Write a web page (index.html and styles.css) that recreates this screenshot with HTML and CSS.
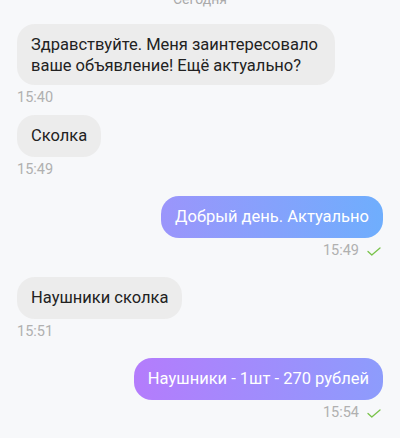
FILE: index.html
```html
<!DOCTYPE html>
<html lang="ru">
<head>
<meta charset="utf-8">
<link rel="stylesheet" href="styles.css">
</head>
<body>
<div class="chat">
  <div class="date">Сегодня</div>

  <div class="msg in first">
    <div class="bubble multi">Здравствуйте. Меня заинтересовало ваше объявление! Ещё актуально?</div>
    <div class="meta">15:40</div>
  </div>

  <div class="msg in">
    <div class="bubble">Сколка</div>
    <div class="meta">15:49</div>
  </div>

  <div class="msg out switch">
    <div class="bubble grad-a">Добрый день. Актуально</div>
    <div class="meta">15:49
      <svg class="check" width="14" height="9" viewBox="0 0 14 9"><path d="M1 4.5 L4.8 8 L13 1" fill="none" stroke="#79c34a" stroke-width="1.3" stroke-linecap="round" stroke-linejoin="round"/></svg>
    </div>
  </div>

  <div class="msg in switch">
    <div class="bubble">Наушники сколка</div>
    <div class="meta">15:51</div>
  </div>

  <div class="msg out switch">
    <div class="bubble grad-b">Наушники - 1шт - 270 рублей</div>
    <div class="meta">15:54
      <svg class="check" width="14" height="9" viewBox="0 0 14 9"><path d="M1 4.5 L4.8 8 L13 1" fill="none" stroke="#79c34a" stroke-width="1.3" stroke-linecap="round" stroke-linejoin="round"/></svg>
    </div>
  </div>
</div>
</body>
</html>
```

FILE: styles.css
```css
html, body {
  margin: 0;
  padding: 0;
  background: #f7f8fa;
}

body {
  font-family: Roboto, "Noto Sans", sans-serif;
  color: #222;
  width: 400px;
  height: 438px;
  overflow: hidden;
}

.chat {
  display: flex;
  flex-direction: column;
  padding: 0 17px;
}

.date {
  margin-top: -9px;
  text-align: center;
  font-size: 14px;
  line-height: 16px;
  color: #aaaaaa;
}

.msg {
  display: flex;
  flex-direction: column;
  margin-top: 9px;
}

.msg.first {
  margin-top: 17px;
}

.msg.switch {
  margin-top: 18px;
}

.msg.in {
  align-items: flex-start;
}

.msg.out {
  align-items: flex-end;
}

.bubble {
  box-sizing: border-box;
  max-width: 318px;
  padding: 10px 14px;
  border-radius: 18px;
  background: #ececec;
  font-size: 16.5px;
  line-height: 22px;
}

.bubble.multi {
  padding: 9.5px 14px;
  line-height: 21px;
}

.grad-a {
  color: #fff;
  background: linear-gradient(90deg, #9b95fb 0%, #6faefd 100%);
}

.grad-b {
  color: #fff;
  background: linear-gradient(90deg, #b47cfc 0%, #8d9cfc 100%);
}

.meta {
  display: flex;
  align-items: center;
  gap: 8px;
  margin-top: 5px;
  font-size: 14.5px;
  line-height: 16px;
  color: #b0b0b0;
}

.msg.out .meta {
  padding-right: 2px;
}

.check {
  display: block;
}
```
